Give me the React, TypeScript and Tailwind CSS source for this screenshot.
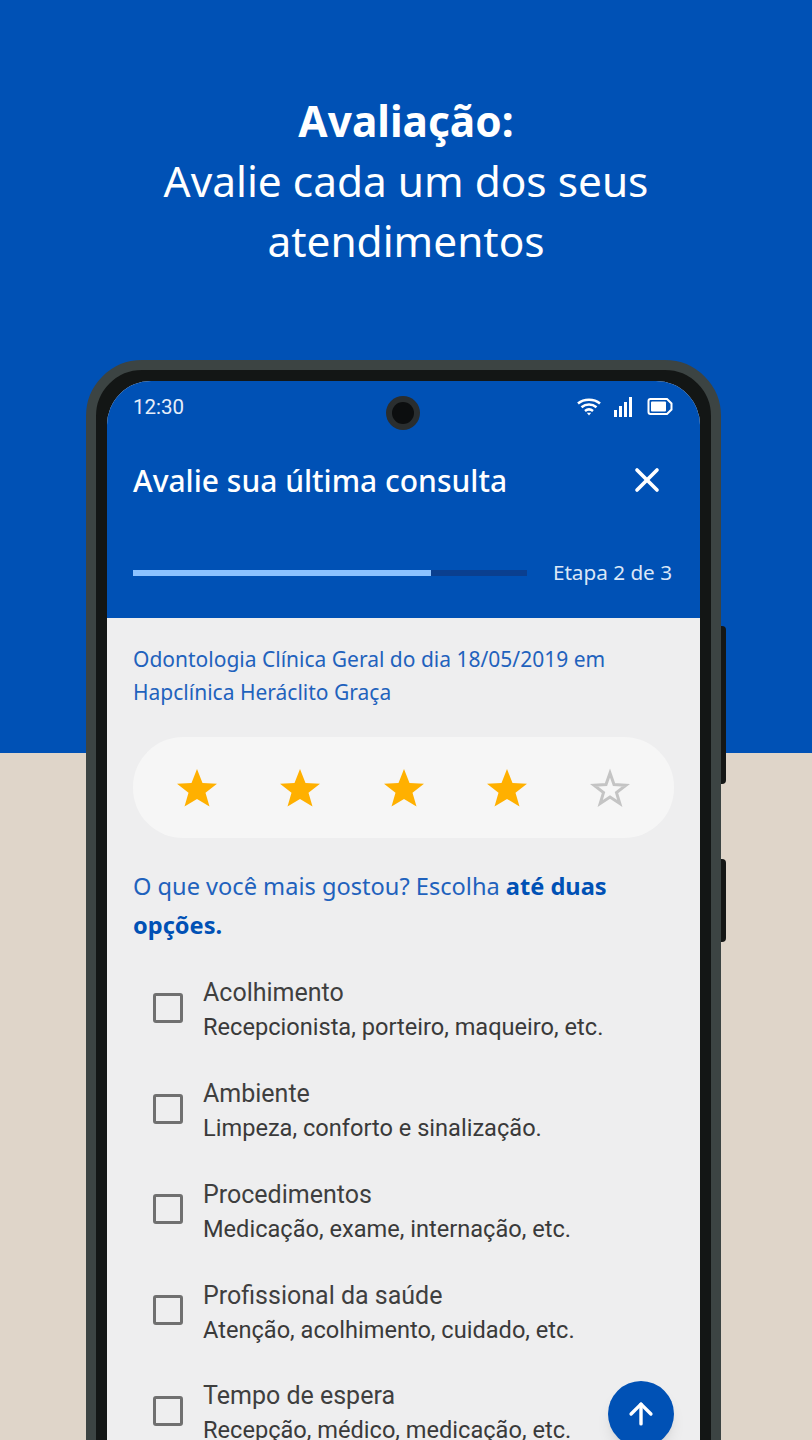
import { X, ArrowUp } from "lucide-react";

const options = [
  { title: "Acolhimento", desc: "Recepcionista, porteiro, maqueiro, etc." },
  { title: "Ambiente", desc: "Limpeza, conforto e sinalização." },
  { title: "Procedimentos", desc: "Medicação, exame, internação, etc." },
  { title: "Profissional da saúde", desc: "Atenção, acolhimento, cuidado, etc." },
  { title: "Tempo de espera", desc: "Recepção, médico, medicação, etc." },
];

const STAR =
  "M20 1 L25.5 15 L40 15.7 L28.5 24.8 L32.5 38.5 L20 31 L7.5 38.5 L11.5 24.8 L0 15.7 L14.5 15 Z";

function Star({ filled }: { filled: boolean }) {
  return (
    <svg viewBox="0 0 40 40" className="w-10 h-10">
      {filled ? (
        <path d={STAR} fill="#ffb000" />
      ) : (
        <path d="M20 5 L24 16.5 L36 17.2 L26.5 24.6 L29.8 35.5 L20 29 L10.2 35.5 L13.5 24.6 L4 17.2 L16 16.5 Z" fill="none" stroke="#c4c4c4" strokeWidth="3" />
      )}
    </svg>
  );
}

function StatusIcons() {
  return (
    <div className="flex items-center pr-[1px]">
      <svg viewBox="0 0 24 20" className="w-6 h-5" fill="none" stroke="white" strokeWidth="2.6">
        <path d="M1 6.5 C7 1.5 17 1.5 23 6.5" />
        <path d="M4.5 10.3 C9 6.6 15 6.6 19.5 10.3" />
        <path d="M8 14 C10.5 12 13.5 12 16 14" />
        <path d="M9.8 15.8 L12 18.6 L14.2 15.8 Z" fill="white" stroke="none" />
      </svg>
      <svg viewBox="0 0 18 20" className="ml-[13px] w-[18px] h-5" fill="white">
        <rect x="0" y="13" width="3" height="7" />
        <rect x="5" y="9" width="3" height="11" />
        <rect x="10" y="5" width="3" height="15" />
        <rect x="15" y="0" width="3" height="20" />
      </svg>
      <svg viewBox="0 0 26 20" className="ml-[15px] w-[26px] h-5">
        <path d="M3.5 2 H20 L24.5 6.5 V12.5 L20 17 H3.5 Q1.5 17 1.5 15 V4 Q1.5 2 3.5 2 Z" fill="none" stroke="white" strokeWidth="2" />
        <rect x="4" y="4.5" width="15" height="10" rx="1" fill="white" />
      </svg>
    </div>
  );
}

export default function App() {
  return (
    <div className="relative w-[812px] h-[1440px] overflow-hidden bg-[#dfd5c9] font-['Noto_Sans',sans-serif]">
      <div className="absolute inset-x-0 top-0 h-[753px] bg-[#0051b5]" />

      <div className="relative">
        <div className="pt-[91px] text-center text-white text-[42.4px] leading-[60px]">
          <p className="font-bold">Avaliação:</p>
          <p>Avalie cada um dos seus</p>
          <p>atendimentos</p>
        </div>

        {/* Phone */}
        <div className="relative mt-[89px] ml-[86px] w-[635px]">
          <div className="absolute -right-[5px] top-[266px] w-2 h-[158px] rounded-r bg-[#151716]" />
          <div className="absolute -right-[5px] top-[499px] w-2 h-[83px] rounded-r bg-[#151716]" />

          <div className="relative h-[1200px] rounded-[56px] border-[10px] border-[#3c4443] bg-[#131615] pt-[11px] px-[11px]">
            <div className="relative h-full overflow-hidden rounded-t-[44px] bg-[#eeeeef]">
              {/* Header */}
              <div className="bg-[#0051b5] h-[237px] px-[26px] text-white">
                <div className="flex items-center justify-between h-[52px] font-['Roboto',sans-serif] text-[20.5px] text-[#e6eefa]">
                  <span>12:30</span>
                  <StatusIcons />
                </div>
                <div className="flex items-center justify-between mt-[22px] h-[50px]">
                  <h1 className="text-[30px] font-medium">Avalie sua última consulta</h1>
                  <X className="w-[40px] h-[40px] mr-[7px]" strokeWidth={2.2} />
                </div>
                <div className="flex items-center justify-between mt-[52px]">
                  <div className="w-[394px] h-[6px] bg-[#0a3f8f]">
                    <div className="w-[298px] h-full bg-[#8cc2ff]" />
                  </div>
                  <span className="text-[20.7px] text-[#dbe7f7] mr-[2px]">Etapa 2 de 3</span>
                </div>
              </div>

              {/* Camera */}
              <div className="absolute left-[279px] top-[15px] w-[34px] h-[34px] rounded-full bg-[#2a2e2f] flex items-center justify-center">
                <div className="w-[22px] h-[22px] rounded-full bg-[#0c0e0f]" />
              </div>

              {/* Content */}
              <div className="px-[26px]">
                <p className="pt-[25px] text-[21px] leading-[33px] text-[#1f62bd]">
                  Odontologia Clínica Geral do dia 18/05/2019 em
                  <br />
                  Hapclínica Heráclito Graça
                </p>

                <div className="mt-[28px] h-[101px] rounded-[50px] bg-[#f6f6f6] flex items-center justify-between pl-[44px] pr-[44px]">
                  {[true, true, true, true, false].map((filled, i) => (
                    <Star key={i} filled={filled} />
                  ))}
                </div>

                <p className="mt-[29px] text-[23.6px] leading-[39px] text-[#1f62bd]">
                  O que você mais gostou? Escolha <b className="text-[#0051b5]">até duas</b>
                  <br />
                  <b className="text-[#0051b5]">opções.</b>
                </p>

                <div className="mt-[20px] flex flex-col gap-[15px] font-['Roboto',sans-serif]">
                  {options.map((o) => (
                    <div key={o.title} className="flex items-center pl-[20px] h-[85.75px]">
                      <div className="w-[30px] h-[30px] rounded-[3px] border-[3px] border-[#707070]" />
                      <div className="ml-[20px] pt-[4px]">
                        <p className="text-[25px] leading-[36px] text-[#3f3f3f]">{o.title}</p>
                        <p className="text-[23.6px] leading-[33px] text-[#3a3a3a]">{o.desc}</p>
                      </div>
                    </div>
                  ))}
                </div>
              </div>

              {/* Scroll to top */}
              <div className="absolute left-[501px] top-[1000px] w-[66px] h-[66px] rounded-full bg-[#0051b5] shadow-lg flex items-center justify-center">
                <ArrowUp className="w-[34px] h-[34px] text-white" strokeWidth={2.4} />
              </div>
            </div>
          </div>
        </div>
      </div>
    </div>
  );
}
